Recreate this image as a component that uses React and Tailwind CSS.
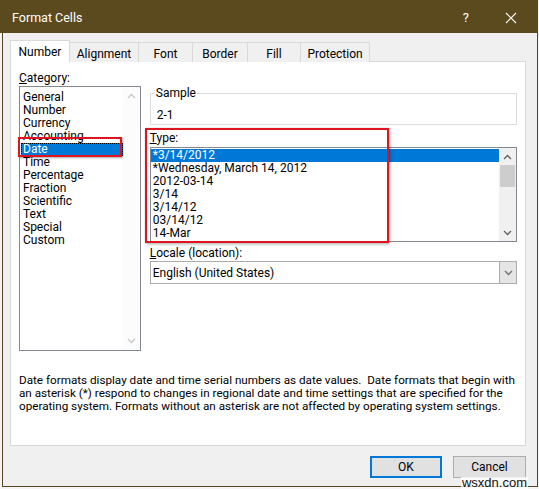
import React from "react";

const ChevUp = ({ c = "#606060" }) => (
  <svg width="9" height="6" viewBox="0 0 9 6"><polyline points="1,5 4.5,1.5 8,5" fill="none" stroke={c} strokeWidth="1.3" /></svg>
);
const ChevDown = ({ c = "#606060" }) => (
  <svg width="9" height="6" viewBox="0 0 9 6"><polyline points="1,1 4.5,4.5 8,1" fill="none" stroke={c} strokeWidth="1.3" /></svg>
);

const categories = ["General", "Number", "Currency", "Accounting", "Date", "Time", "Percentage", "Fraction", "Scientific", "Text", "Special", "Custom"];
const types = ["*3/14/2012", "*Wednesday, March 14, 2012", "2012-03-14", "3/14", "3/14/12", "03/14/12", "14-Mar"];
const tabs = ["Alignment", "Font", "Border", "Fill", "Protection"];
const tabW = ["w-[69px]", "w-[54px]", "w-[55px]", "w-[53px]", "w-[69px]"];

export default function App() {
  return (
    <div className="w-[539px] h-[489px] bg-[#f4f4f4] relative font-['Segoe_UI','Roboto',sans-serif] text-[12px] text-black">
      <div className="w-[536px] h-[487px] ml-[2px] flex flex-col border-x border-b border-[#55461f] bg-[#f0f0f0]">
        {/* title bar */}
        <div className="h-[33px] bg-[#5b4a1e] flex items-center text-white shrink-0 -ml-[3px] -mr-[1px] pt-[3px]">
          <span className="ml-[12px] text-[12.5px]">Format Cells</span>
          <span className="ml-auto mr-[36px] text-[13px]">?</span>
          <svg width="12" height="12" viewBox="0 0 12 12" className="mr-[21px]"><path d="M1 1 L11 11 M11 1 L1 11" stroke="#fff" strokeWidth="1.1" /></svg>
        </div>
        {/* body */}
        <div className="flex-1 flex flex-col pl-[7px] pr-[11px] pt-[7px]">
          <div className="flex items-end h-[22px] relative z-10">
            <div className="w-[60px] h-[22px] bg-white border-x border-t border-[#d9d9d9] flex items-center justify-center pt-[1px]">Number</div>
            {tabs.map((t, i) => (
              <div key={t} className={`${tabW[i]} h-[20px] border-t border-r border-[#d9d9d9] bg-[#f0f0f0] flex items-center justify-center pt-[2px]`}>{t}</div>
            ))}
          </div>
          <div className="h-[385px] -mt-[1px] bg-white border border-[#d9d9d9] relative flex flex-col px-[8px] pt-[7px]">
            <div className="flex gap-[9px]">
              {/* left column */}
              <div className="w-[122px] flex flex-col">
                <div className="h-[17px] leading-[19px]"><span className="underline">C</span>ategory:</div>
                <div className="h-[265px] border border-[#828790] flex relative">
                  <div className="flex-1 flex flex-col pt-[4px] pl-[1px]">
                    {categories.map((c) => (
                      <div key={c} className={`h-[13px] leading-[13px] pl-[2px] ${c === "Date" ? "bg-[#0078d7] text-white outline outline-1 outline-dotted outline-[#000] -outline-offset-1" : ""}`}>{c}</div>
                    ))}
                  </div>
                  <div className="w-[17px] bg-[#fcfcfc] flex flex-col items-center justify-between py-[6px]">
                    <ChevUp c="#c8c8c8" />
                    <ChevDown c="#c8c8c8" />
                  </div>
                  <div className="absolute left-[-2px] top-[50px] w-[104px] h-[20px] border-2 border-[#e0141e] shadow-[1px_1px_2px_rgba(0,0,0,0.35)]" />
                </div>
              </div>
              {/* right column */}
              <div className="w-[368px] flex flex-col relative">
                <div className="mt-[24px] h-[32px] border border-[#dcdcdc] relative px-[6px] pt-[14px] leading-[14px]">
                  <span className="absolute left-[4px] -top-[8px] bg-white px-[1px] leading-[14px]">Sample</span>
                  2-1
                </div>
                <div className="mt-[6px] h-[14px] leading-[14px]"><span className="underline">T</span>ype:</div>
                <div className="mt-[2px] h-[95px] border border-[#828790] flex">
                  <div className="flex-1 flex flex-col pt-[1px]">
                    {types.map((t, i) => (
                      <div key={t} className={`h-[13px] leading-[13px] pl-[2px] ${i === 0 ? "bg-[#0078d7] text-white" : ""}`}>{t}</div>
                    ))}
                  </div>
                  <div className="w-[17px] bg-[#f0f0f0] flex flex-col items-center">
                    <div className="h-[17px] flex items-center justify-center"><ChevUp /></div>
                    <div className="w-[15px] h-[22px] bg-[#cdcdcd]" />
                    <div className="flex-1" />
                    <div className="h-[17px] flex items-center justify-center"><ChevDown /></div>
                  </div>
                </div>
                <div className="absolute left-[-5px] top-[59px] w-[244px] h-[115px] border-2 border-[#e0141e] shadow-[1px_1px_3px_rgba(0,0,0,0.35)] pointer-events-none" />
                <div className="mt-[4px] h-[14px] leading-[14px]"><span className="underline">L</span>ocale (location):</div>
                <div className="mt-[1px] h-[23px] border border-[#acacac] flex items-center bg-white">
                  <span className="pl-[2px] flex-1">English (United States)</span>
                  <div className="w-[17px] h-[21px] bg-[#e5e5e5] border-l border-[#acacac] flex items-center justify-center"><ChevDown c="#707070" /></div>
                </div>
              </div>
            </div>
            <div className="mt-[23px] leading-[13px] w-[498px] text-[11.7px]">
              Date formats display date and time serial numbers as date values.&nbsp; Date formats that begin with an asterisk (*) respond to changes in regional date and time settings that are specified for the operating system. Formats without an asterisk are not affected by operating system settings.
            </div>
          </div>
          <div className="flex justify-end gap-[11px] mt-[10px]">
            <div className="w-[72px] h-[22px] border-2 border-[#0078d7] bg-[#e1e1e1] flex items-center justify-center">OK</div>
            <div className="w-[73px] h-[22px] border border-[#adadad] bg-[#e1e1e1] flex items-center justify-center">Cancel</div>
          </div>
        </div>
      </div>
      <div className="absolute right-[11px] bottom-0 h-[12px] px-[1px] bg-white/80 text-[13px] leading-[12px] font-['Liberation_Sans',sans-serif] text-[#111]">wsxdn.com</div>
    </div>
  );
}
